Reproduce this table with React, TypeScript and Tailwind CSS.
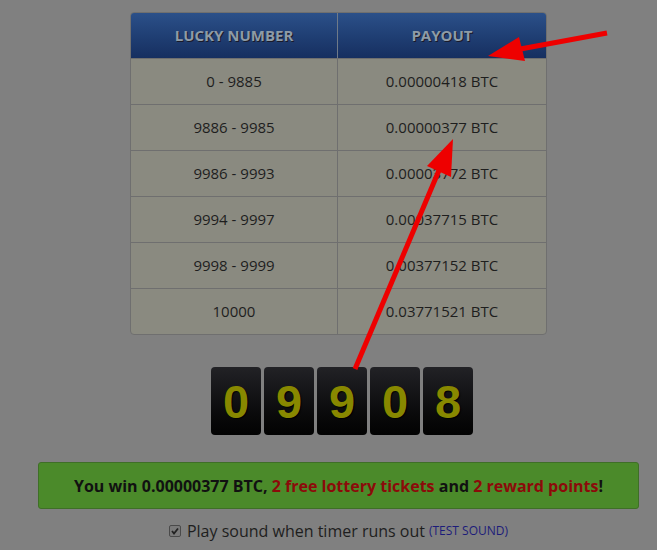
import React from "react";

const rows: [string, string][] = [
  ["0 - 9885", "0.00000418 BTC"],
  ["9886 - 9985", "0.00000377 BTC"],
  ["9986 - 9993", "0.00003772 BTC"],
  ["9994 - 9997", "0.00037715 BTC"],
  ["9998 - 9999", "0.00377152 BTC"],
  ["10000", "0.03771521 BTC"],
];

const digits = ["0", "9", "9", "0", "8"];

export default function App() {
  return (
    <div
      className="relative w-[657px] h-[550px] overflow-hidden bg-[#808080]"
      style={{ fontFamily: "'Open Sans', 'Liberation Sans', sans-serif" }}
    >
      <div className="ml-[38px] w-[601px] pt-[12px] flex flex-col">
        <div className="ml-[92px] w-[417px] rounded-[4px] border border-[#6f6f6f] overflow-hidden bg-[#8a8a80]">
          <div className="grid grid-cols-[207px_1fr] h-[45px] bg-gradient-to-b from-[#2b5089] to-[#162f60] text-[#8e9ba6] font-bold text-[15px]">
            <div className="flex items-center justify-center border-r border-[#6f7a88] [text-shadow:1px_1px_0_#1a1a2a]">LUCKY NUMBER</div>
            <div className="flex items-center justify-center [text-shadow:1px_1px_0_#1a1a2a]">PAYOUT</div>
          </div>
          {rows.map(([a, b], i) => (
            <div
              key={i}
              className="grid grid-cols-[207px_1fr] h-[46px] border-t border-[#6f6f6f] text-[15px] text-[#1e1e1e]"
            >
              <div className="flex items-center justify-center border-r border-[#6f6f6f]">{a}</div>
              <div className="flex items-center justify-center">{b}</div>
            </div>
          ))}
        </div>

        <div className="mt-[32px] ml-[173px] flex gap-[3px]">
          {digits.map((d, i) => (
            <div
              key={i}
              className="w-[50px] h-[68px] rounded-[4px] bg-gradient-to-b from-[#222226] to-[#030303] flex items-center justify-center text-[#888800] font-bold text-[47px] leading-none [text-shadow:1px_1px_1px_#000]"
              style={{ fontFamily: "'Liberation Sans', Arial, sans-serif" }}
            >
              {d}
            </div>
          ))}
        </div>

        <div className="mt-[27px] h-[47px] rounded-[3px] border border-[#3f6f27] bg-[#4b8a2a] flex items-center justify-center text-[16px] font-bold text-[#111]">
          <span>
            You win 0.00000377 BTC, <span className="text-[#8b0a0a]">2 free lottery tickets</span> and{" "}
            <span className="text-[#8b0a0a]">2 reward points</span>!
          </span>
        </div>

        <div className="mt-[10px] flex items-center justify-center text-[16px] text-[#1e1e1e]">
          <span className="w-[12px] h-[12px] mr-[6px] rounded-[2px] bg-[#7a7a7a] border border-[#4a4a4a] flex items-center justify-center">
            <svg width="10" height="10" viewBox="0 0 10 10">
              <path d="M2 5 L4 7.5 L8 2.5" stroke="#222" strokeWidth="1.8" fill="none" />
            </svg>
          </span>
          <span>Play sound when timer runs out</span>
          <span className="ml-[4px] text-[12px] text-[#1c1c7a]">(TEST SOUND)</span>
        </div>
      </div>

      <svg className="absolute left-0 top-0 pointer-events-none" width="657" height="550">
        <line x1="607" y1="33" x2="515" y2="50" stroke="#ee0000" strokeWidth="5" />
        <polygon points="488,56 519,37 525,61" fill="#ee0000" />
        <line x1="355" y1="369" x2="440" y2="168" stroke="#ee0000" strokeWidth="5" />
        <polygon points="453,139 427,166 451,177" fill="#ee0000" />
      </svg>
    </div>
  );
}
